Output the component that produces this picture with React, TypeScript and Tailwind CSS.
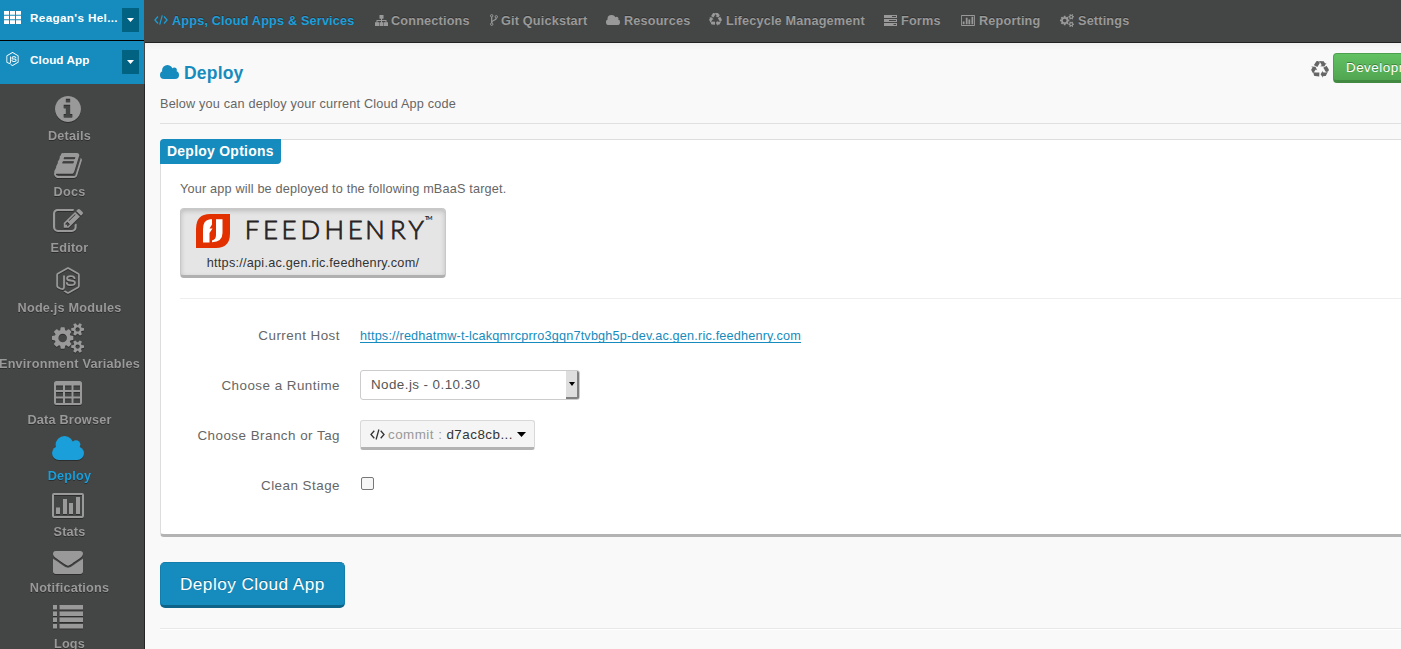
import React from "react";
import { FaNodeJs } from "react-icons/fa";

type IconProps = { className: string };

function Glyph({ box, d, className, children }: { box: string; d?: string; className: string; children?: React.ReactNode }) {
  return (
    <svg viewBox={box} preserveAspectRatio="none" fill="currentColor" className={"block shrink-0 " + className}>
      {d ? <path d={d} /> : null}
      {children}
    </svg>
  );
}

const INFO =
  "M1152 1376v-160q0-14-9-23t-23-9h-96v-512q0-14-9-23t-23-9h-320q-14 0-23 9t-9 23v160q0 14 9 23t23 9h96v320h-96q-14 0-23 9t-9 23v160q0 14 9 23t23 9h448q14 0 23-9t9-23zm-128-896v-160q0-14-9-23t-23-9h-192q-14 0-23 9t-9 23v160q0 14 9 23t23 9h192q14 0 23-9t9-23zm640 416q0 209-103 385.5t-279.5 279.5-385.5 103-385.5-103-279.5-279.5-103-385.5 103-385.5 279.5-279.5 385.5-103 385.5 103 279.5 279.5 103 385.5z";
const BOOK =
  "M1703 478q40 57 18 129l-275 906q-19 64-76.5 107.5t-122.5 43.5h-923q-77 0-148.5-53.5t-99.5-131.5q-24-67-2-127 0-4 3-27t4-37q1-8-3-21.5t-3-19.5q2-11 8-21t16.5-23.5 16.5-23.5q23-38 45-91.5t30-91.5q3-10 .5-30t-.5-28q3-11 17-28t17-23q21-36 42-92t25-90q1-9-2.5-32t.5-28q4-13 22-30.5t22-22.5q19-26 42.5-84.5t27.5-96.5q1-8-3-25.5t-2-26.5q2-8 9-18t18-23 17-21q8-12 16.5-30.5t15-35 16-36 19.5-32 26.5-23.5 36-11.5 47.5 5.5l-1 3q38-9 51-9h761q74 0 114 56t18 130l-274 906q-36 119-71.5 153.5t-128.5 34.5h-869q-27 0-38 15-11 16-1 43 24 70 144 70h923q29 0 56-15.5t35-41.5l300-987q7-22 5-57 38 15 59 43zm-1064 2q-4 13 2 22.5t20 9.5h608q13 0 25.5-9.5t16.5-22.5l21-64q4-13-2-22.5t-20-9.5h-608q-13 0-25.5 9.5t-16.5 22.5zm-83 256q-4 13 2 22.5t20 9.5h608q13 0 25.5-9.5t16.5-22.5l21-64q4-13-2-22.5t-20-9.5h-608q-13 0-25.5 9.5t-16.5 22.5z";
const EDIT =
  "M888 1184l116-116-152-152-116 116v56h96v96h56zm440-720q-16-16-33 1l-350 350q-17 17-1 33t33-1l350-350q17-17 1-33zm80 594v190q0 119-84.5 203.5t-203.5 84.5h-832q-119 0-203.5-84.5t-84.5-203.5v-832q0-119 84.5-203.5t203.5-84.5h832q63 0 117 25 15 7 18 23 3 17-9 29l-49 49q-14 14-32 8-23-6-45-6h-832q-66 0-113 47t-47 113v832q0 66 47 113t113 47h832q66 0 113-47t47-113v-126q0-13 9-22l64-64q15-15 35-7t20 29zm-96-738l288 288-672 672h-288v-288zm444 132l-92 92-288-288 92-92q28-28 68-28t68 28l152 152q28 28 28 68t-28 68z";
const COGS =
  "M896 896q0-106-75-181t-181-75-181 75-75 181 75 181 181 75 181-75 75-181zm768 512q0-52-38-90t-90-38-90 38-38 90q0 53 37.5 90.5t90.5 37.5 90.5-37.5 37.5-90.5zm0-1024q0-52-38-90t-90-38-90 38-38 90q0 53 37.5 90.5t90.5 37.5 90.5-37.5 37.5-90.5zm-384 421v185q0 10-7 19.5t-16 10.5l-155 24q-11 35-32 76 34 48 90 115 7 11 7 20 0 12-7 19-23 30-82.5 89.5t-78.5 59.5q-11 0-21-7l-115-90q-37 19-77 31-11 108-23 155-7 24-30 24h-186q-11 0-20-7.5t-10-17.5l-23-153q-34-10-75-31l-118 89q-7 7-20 7-11 0-21-8-144-133-144-160 0-9 7-19 10-14 41-53t47-61q-23-44-35-82l-152-24q-10-1-17-9.5t-7-19.5v-185q0-10 7-19.5t16-10.5l155-24q11-35 32-76-34-48-90-115-7-11-7-20 0-12 7-20 22-30 82-89t79-59q11 0 21 7l115 90q34-18 77-32 11-108 23-154 7-24 30-24h186q11 0 20 7.5t10 17.5l23 153q34 10 75 31l118-89q8-7 20-7 11 0 21 8 144 133 144 160 0 8-7 19-12 16-42 54t-45 60q23 48 34 82l152 23q10 2 17 10.5t7 19.5zm640 533v140q0 16-149 31-12 27-30 52 51 113 51 138 0 4-4 7-122 71-124 71-8 0-46-47t-52-68q-20 2-30 2t-30-2q-14 21-52 68t-46 47q-2 0-124-71-4-3-4-7 0-25 51-138-18-25-30-52-149-15-149-31v-140q0-16 149-31 13-29 30-52-51-113-51-138 0-4 4-7 4-2 35-20t59-34 30-16q8 0 46 46.5t52 67.5q20-2 30-2t30 2q51-71 92-112l6-2q4 0 124 70 4 3 4 7 0 25-51 138 17 23 30 52 149 15 149 31zm0-1024v140q0 16-149 31-12 27-30 52 51 113 51 138 0 4-4 7-122 71-124 71-8 0-46-47t-52-68q-20 2-30 2t-30-2q-14 21-52 68t-46 47q-2 0-124-71-4-3-4-7 0-25 51-138-18-25-30-52-149-15-149-31v-140q0-16 149-31 13-29 30-52-51-113-51-138 0-4 4-7 4-2 35-20t59-34 30-16q8 0 46 46.5t52 67.5q20-2 30-2t30 2q51-71 92-112l6-2q4 0 124 70 4 3 4 7 0 25-51 138 17 23 30 52 149 15 149 31z";
const ENVELOPE =
  "M1792 710v794q0 66-47 113t-113 47h-1472q-66 0-113-47t-47-113v-794q44 49 101 87 362 246 497 345 57 42 92.5 65.5t94.5 48 110 24.5h2q51 0 110-24.5t94.5-48 92.5-65.5q170-123 498-345 57-39 100-87zm0-294q0 79-49 151t-122 123q-376 261-468 325-10 7-42.5 31t-54 38.5-52 32.5-57.5 27-50 9h-2q-23 0-50-9t-57.5-27-52-32.5-54-38.5-42.5-31q-91-64-262-182.5t-205-142.5q-62-42-117-115.5t-55-136.5q0-78 41.5-130t118.5-52h1472q65 0 112.5 47t47.5 113z";
const RECYCLE =
  "M836 1169l-15 368-2 22-420-29q-36-3-67-31.5t-47-65.5q-11-27-14.5-55t4-65 12-55 21.5-64 19-53q78 12 509 28zm-387-586l180 379-147-92q-63 72-111.5 144.5t-72.5 125-39.500 94.500-18.500 63l-4 21-190-357q-17-26-18-56t6-47l8-18q35-63 114-188l-140-86zm1231 517l-188 359q-12 29-36.500 46.500t-43.500 20.500l-18 4q-71 7-219 12l8 164-230-367 211-362 7 173q170 16 283 5t170-33zm-785-924q-47 63-265 435l-317-187-19-12 225-356q20-31 60-45t80-10q24 2 48.500 12t42 21 41.500 33 36 34.500 36 39.500 32 35zm655 307l212 363q18 37 12.500 76t-27.500 74q-13 20-33 37t-38 28-48.500 22-47 16-51.500 14-46 12q-34-72-265-436l313-195zm-143-226l142-83-220 373-419-20 151-86q-34-89-75-166t-75.500-123.500-64.500-80-47-46.500l-17-13 405 1q31-3 58 10.500t39 28.500l11 15q39 61 112 190z";

const CloudIcon = ({ className }: IconProps) => (
  <Glyph box="0 0 32 24" className={className}>
    <circle cx="12.5" cy="9" r="9" />
    <circle cx="24" cy="8.600" r="4.400" />
    <circle cx="6.900" cy="17.100" r="6.900" />
    <circle cx="25.200" cy="17.200" r="6.800" />
    <path d="M7 9h18v15H7z" />
  </Glyph>
);
const InfoIcon = ({ className }: IconProps) => <Glyph box="128 128 1536 1536" d={INFO} className={className} />;
const BookIcon = ({ className }: IconProps) => <Glyph box="62 128 1670 1536" d={BOOK} className={className} />;
const EditIcon = ({ className }: IconProps) => <Glyph box="0 136 1784 1400" d={EDIT} className={className} />;
const CogsIcon = ({ className }: IconProps) => <Glyph box="0 0 1920 1792" d={COGS} className={className} />;
const EnvelopeIcon = ({ className }: IconProps) => <Glyph box="0 256 1792 1408" d={ENVELOPE} className={className} />;
const RecycleIcon = ({ className }: IconProps) => <Glyph box="0 0 1792 1720" d={RECYCLE} className={className} />;

const TableIcon = ({ className }: IconProps) => (
  <Glyph box="0 0 28 24" className={className}>
    <path
      fillRule="evenodd"
      d="M2.500 0h23A2.500 2.500 0 0 1 28 2.500v19a2.500 2.500 0 0 1-2.500 2.500h-23A2.500 2.500 0 0 1 0 21.500v-19A2.500 2.500 0 0 1 2.500 0zM2 4.500V9h7V4.500zM11 4.500V9h6.500V4.500zM19.500 4.500V9H26V4.500zM2 11v4.500h7V11zM11 11v4.500h6.500V11zM19.500 11v4.500H26V11zM2 17.500V22h7v-4.500zM11 17.500V22h6.500v-4.500zM19.500 17.500V22H26v-4.500z"
    />
  </Glyph>
);

const ChartIcon = ({ className }: IconProps) => (
  <Glyph box="0 0 32 25" className={className}>
    <path
      fillRule="evenodd"
      d="M2 0h28a2 2 0 0 1 2 2v21a2 2 0 0 1-2 2H2a2 2 0 0 1-2-2V2a2 2 0 0 1 2-2zM2 2v21h28V2zM4 14.500h4V21H4zM11 6h4v15h-4zM17 10h4v11h-4zM24 4h4v17h-4z"
    />
  </Glyph>
);

const ListIcon = ({ className }: IconProps) => (
  <Glyph
    box="0 0 30 24"
    className={className}
    d="M0 0h4v4.500H0zM6.500 0H30v4.500H6.500zM0 6.500h4V11H0zM6.500 6.500H30V11H6.500zM0 12.500h4V17H0zM6.500 12.500H30V17H6.500zM0 19h4v4.500H0zM6.500 19H30v4.500H6.500z"
  />
);

const SitemapIcon = ({ className }: IconProps) => (
  <Glyph box="0 0 13 12" className={className} d="M4.500 0h4v4H7v1.500h4.500V8H13v4H9V8h1.500V6.500H7V8h1.500v4h-4V8H6V6.500H2.500V8H4v4H0V8h1.500V5.500H6V4H4.500z" />
);

const ForkIcon = ({ className }: IconProps) => (
  <svg viewBox="0 0 8 12" fill="none" stroke="currentColor" className={"block shrink-0 " + className}>
    <circle cx="1.700" cy="1.800" r="1.200" />
    <circle cx="6.300" cy="2.800" r="1.200" />
    <circle cx="1.700" cy="10.200" r="1.200" />
    <path d="M1.700 3v6M6.300 4c0 2.800-4.400 1.800-4.600 4.500" strokeWidth="1.200" />
  </svg>
);

const TasksIcon = ({ className }: IconProps) => (
  <Glyph box="0 0 13 11" className={className}>
    <path fillRule="evenodd" d="M0 0h13v3H0zM8 1v1h4V1zM0 4h13v3H0zM5 5v1h7V5zM0 8h13v3H0zM9.500 9v1H12V9z" />
  </Glyph>
);

const GridIcon = ({ className }: IconProps) => (
  <Glyph box="0 0 17 13" className={className} d="M0 0h5v3.700H0zM6 0h5v3.700H6zM12 0h5v3.700h-5zM0 4.700h5v3.600H0zM6 4.700h5v3.600H6zM12 4.700h5v3.600h-5zM0 9.300h5V13H0zM6 9.300h5V13H6zM12 9.300h5V13h-5z" />
);

const CodeIcon = ({ className }: IconProps) => (
  <svg viewBox="0 0 14 10" fill="none" stroke="currentColor" strokeWidth="1.200" className={"block shrink-0 " + className}>
    <path d="M4 1.500.9 5 4 8.500M10 1.500 13.100 5 10 8.500M8.300.3 5.700 9.700" />
  </svg>
);

const Caret = ({ className }: IconProps) => <Glyph box="0 0 8 4" className={className} d="M0 0h8L4 4z" />;

const NAV = [
  { label: "Apps, Cloud Apps & Services", item: "w-[221px] text-[#1b9fda]", icon: <CodeIcon className="w-[14px] h-[10px]" />, gap: "w-[18px]" },
  { label: "Connections", item: "w-[115px]", icon: <SitemapIcon className="w-[13px] h-[11px]" />, gap: "w-[16px]" },
  { label: "Git Quickstart", item: "w-[116px]", icon: <ForkIcon className="w-[8px] h-[12px]" />, gap: "w-[11px]" },
  { label: "Resources", item: "w-[103px]", icon: <CloudIcon className="w-[14px] h-[10px]" />, gap: "w-[18px]" },
  { label: "Lifecycle Management", item: "w-[175px]", icon: <RecycleIcon className="-mt-px w-[13px] h-[13px]" />, gap: "w-[17px]" },
  { label: "Forms", item: "w-[77px]", icon: <TasksIcon className="w-[13px] h-[11px]" />, gap: "w-[17px]" },
  { label: "Reporting", item: "w-[99px]", icon: <ChartIcon className="w-[14px] h-[11px]" />, gap: "w-[18px]" },
  { label: "Settings", item: "w-[80px]", icon: <CogsIcon className="w-[14px] h-[13px]" />, gap: "w-[18px]" },
];

const MENU = [
  { label: "Details", box: "h-[56px] pt-[9px]", icon: <InfoIcon className="w-[26px] h-[26px]" /> },
  { label: "Docs", box: "h-[56px] pt-[10px]", icon: <BookIcon className="w-[28px] h-[25px]" /> },
  { label: "Editor", box: "h-[56px] pt-[10px]", icon: <EditIcon className="w-[30px] h-[23px]" /> },
  { label: "Node.js Modules", box: "h-[60px] pt-[12px]", icon: <FaNodeJs className="block w-[24px] h-[27px]" /> },
  { label: "Environment Variables", box: "h-[56px] pt-[8px]", icon: <CogsIcon className="w-[32px] h-[30px]" /> },
  { label: "Data Browser", box: "h-[56px] pt-[10px]", icon: <TableIcon className="w-[28px] h-[24px]" /> },
  { label: "Deploy", box: "h-[56px] pt-[9px] text-[#1b9fda]", icon: <CloudIcon className="w-[32px] h-[24px]" /> },
  { label: "Stats", box: "h-[56px] pt-[10px]", icon: <ChartIcon className="w-[32px] h-[25px]" /> },
  { label: "Notifications", box: "h-[56px] pt-[12px]", icon: <EnvelopeIcon className="w-[30px] h-[23px]" /> },
  { label: "Logs", box: "h-[56px] pt-[10px]", icon: <ListIcon className="w-[30px] h-[24px]" /> },
];

function Sidebar() {
  return (
    <aside className="flex w-[145px] shrink-0 flex-col overflow-hidden bg-[#444645]">
      <div className="flex h-[41px] shrink-0 bg-[#444645]">
        <div className="flex w-[144px] items-start border-b border-black bg-[#168bbd] pl-[4px] text-white">
          <GridIcon className="mt-[11px] w-[17px] h-[13px]" />
          <span className="ml-[9px] w-[92px] whitespace-nowrap text-[11.7px] leading-[36px] font-bold tracking-[0.35px]">Reagan's Hel...</span>
          <span className="mt-[8px] flex h-[24px] w-[17px] items-center justify-center bg-[#026282]">
            <Caret className="w-[7px] h-[4px]" />
          </span>
        </div>
      </div>
      <div className="flex h-[43px] w-[144px] shrink-0 items-start bg-[#168bbd] pl-[6px] text-white">
        <FaNodeJs className="mt-[11px] w-[13px] h-[14px] shrink-0" />
        <span className="ml-[11px] w-[92px] whitespace-nowrap text-[11.7px] leading-[38px] font-bold tracking-[0.1px]">Cloud App</span>
        <span className="mt-[9px] flex h-[24px] w-[17px] items-center justify-center bg-[#026282]">
          <Caret className="w-[7px] h-[4px]" />
        </span>
      </div>
      <nav className="flex grow flex-col border-r border-[#252525] pt-[3px] text-[#999] [filter:drop-shadow(0_1px_0_#2d2d2d)]">
        {MENU.map((m) => (
          <div key={m.label} className={"flex shrink-0 flex-col items-center justify-between pr-[8px] " + m.box}>
            {m.icon}
            <span className="-mr-[3px] h-[16px] whitespace-nowrap text-[12.7px] leading-[18px] font-bold tracking-[0.2px]">{m.label}</span>
          </div>
        ))}
      </nav>
    </aside>
  );
}

function TopNav() {
  return (
    <header className="h-[43px] shrink-0 border-b border-[#222] bg-[#444645] pl-[9px]">
      <nav className="flex h-[40px] items-center text-[12.7px] font-bold tracking-[0.17px] text-[#999] [text-shadow:0_-1px_0_#333]">
        {NAV.map((n) => (
          <a key={n.label} className={"flex h-[20px] shrink-0 items-center whitespace-nowrap " + n.item}>
            <span className={"shrink-0 " + n.gap}>{n.icon}</span>
            <span className="pt-[2px] leading-[18px]">{n.label}</span>
          </a>
        ))}
      </nav>
    </header>
  );
}

function TargetLogo() {
  return (
    <svg viewBox="0 0 240 36" className="block h-[36px] w-[240px]">
      <path d="M0 35V16Q0 1 14 1H34V20.500Q34 35 20 35Z" fill="#e23000" />
      <path d="M7 29.500V16Q7 7 14 6.200H16V11.500L13.500 15.500H16.500L13.500 20V29.500ZM20 6.200H26.500V20Q26.500 28.800 16 29.300V27.500Q20 26.500 20 22Z" fill="#fff" />
      <text
        x="48.7 67 85.4 104.4 128.4 151.7 169.2 194 212.6"
        y="26"
        fontFamily="Lato, sans-serif"
        fontWeight="300"
        fontSize="25.800"
        fill="#262223"
        stroke="#262223"
        strokeWidth="0.800"
      >
        FEEDHENRY
      </text>
      <text x="229" y="6.500" fontFamily="Lato, sans-serif" fontWeight="700" fontSize="5.500" textLength="7.500" fill="#262223">
        TM
      </text>
    </svg>
  );
}

function Row({ label, children }: { label: string; children: React.ReactNode }) {
  return (
    <div className="flex h-[50px] items-center">
      <span className="w-[160px] pt-px text-right text-[13.4px] tracking-[0.48px] text-[#666]">{label}</span>
      <div className="ml-[20px] flex items-center">{children}</div>
    </div>
  );
}

export default function App() {
  return (
    <div className="flex h-[649px] w-[1401px] overflow-hidden bg-[#f9f9f9] font-['Liberation_Sans',Arial,sans-serif] text-[12.7px] text-[#666]">
      <Sidebar />
      <div className="flex min-w-0 grow flex-col">
        <TopNav />
        <main className="flex grow flex-col bg-[linear-gradient(#f1f1f1,#f9f9f9_8px)] pl-[15px]">
          <div className="flex h-[47px] shrink-0 items-start">
            <CloudIcon className="mt-[22px] w-[19px] h-[14px] text-[#168bbd]" />
            <h1 className="ml-[5px] pt-[20px] text-[17.5px] leading-[21px] font-bold tracking-[0.2px] text-[#168bbd]">Deploy</h1>
            <div className="-mr-[30px] ml-auto flex items-start">
              <RecycleIcon className="mt-[18px] h-[17px] w-[18px] text-[#666]" />
              <button className="mt-[10px] ml-[4px] flex h-[30px] w-[98px] items-center rounded-[4px] border border-b-[3px] border-[#4da04d] border-b-[#428a42] bg-gradient-to-b from-[#62c162] to-[#51a651] pt-[3px] pl-[12px] text-[13.4px] tracking-[0.5px] whitespace-nowrap text-white [text-shadow:0_-1px_0_#3d803d]">
                Development
              </button>
            </div>
          </div>
          <p className="h-[33px] shrink-0 pt-[6px] leading-[16px] tracking-[0.17px]">Below you can deploy your current Cloud App code</p>
          <hr className="shrink-0 border-[#e0e0e0]" />
          <section className="mt-[15px] -mr-[8px] flex h-[398px] shrink-0 flex-col items-start rounded-[4px] border border-b-[3px] border-[#ddd] border-b-[#b3b3b3] bg-white">
            <h2 className="-mt-px -ml-px flex h-[25px] w-[121px] items-center rounded-tl-[4px] rounded-br-[4px] bg-[#168bbd] pb-px pl-[7px] text-[13.9px] font-bold tracking-[0.3px] whitespace-nowrap text-white">
              Deploy Options
            </h2>
            <div className="w-full pl-[19px]">
              <p className="pt-[17px] leading-[16px] tracking-[0.17px]">Your app will be deployed to the following mBaaS target.</p>
              <div className="mt-[11px] flex h-[70px] w-[266px] flex-col items-center rounded-[4px] border border-b-[3px] border-[#c8c8c8] border-b-[#b0b0b0] bg-[#e5e5e5] pt-[4px] shadow-[inset_0_2px_5px_rgba(0,0,0,0.18)]">
                <div className="pl-[6px]">
                  <TargetLogo />
                </div>
                <span className="mt-[6px] leading-[16px] tracking-[0.24px] text-[#333]">https://api.ac.gen.ric.feedhenry.com/</span>
              </div>
              <hr className="mt-[20px] mb-[12px] border-[#eee]" />
              <Row label="Current Host">
                <a className="h-[14px] border-b border-[#168bbd] leading-[15px] tracking-[0.175px] text-[#168bbd]">https://redhatmw-t-lcakqmrcprro3gqn7tvbgh5p-dev.ac.gen.ric.feedhenry.com</a>
              </Row>
              <Row label="Choose a Runtime">
                <div className="-mt-[2px] flex h-[30px] w-[220px] items-center rounded-[3px] border border-[#ccc] bg-white pl-[10px] text-[13.4px] tracking-[0.43px] text-[#555]">
                  <span className="grow pt-px">Node.js - 0.10.30</span>
                  <span className="flex h-[28px] w-[13px] items-center justify-center rounded-r-[2px] border-r-2 border-b-2 border-[#808080] bg-[#dedede] text-black">
                    <Caret className="w-[6px] h-[4px]" />
                  </span>
                </div>
              </Row>
              <Row label="Choose Branch or Tag">
                <button className="-mt-[2px] flex h-[30px] w-[175px] items-center rounded-[3px] border border-b-[3px] border-[#d8d8d8] border-b-[#b3b3b3] bg-[#f5f5f5] pl-[9px] text-[13.4px] tracking-[0.48px] whitespace-nowrap text-[#333]">
                  <CodeIcon className="w-[15px] h-[11px]" />
                  <span className="ml-[3px] pt-[2px] text-[#999]">commit :</span>
                  <span className="ml-[4px] pt-[2px]">d7ac8cb...</span>
                  <Caret className="ml-[4px] w-[9px] h-[5px] text-black" />
                </button>
              </Row>
              <Row label="Clean Stage">
                <input type="checkbox" className="-mt-[5px] ml-px block h-[13px] w-[13px] appearance-none rounded-[2px] border border-[#777] bg-[#f6f6f6]" />
              </Row>
            </div>
          </section>
          <button className="mt-[25px] flex h-[46px] w-[185px] shrink-0 items-center rounded-[5px] border border-b-[3px] border-[#147dab] border-b-[#0e6389] bg-[#168bbd] pt-px pl-[19px] text-[17.2px] tracking-[0.45px] whitespace-nowrap text-white [text-shadow:0_-1px_0_#0f6c94]">
            Deploy Cloud App
          </button>
          <div className="mt-[20px] h-[2px] shrink-0 border-t border-[#e8e8e8] bg-white" />
        </main>
      </div>
    </div>
  );
}
